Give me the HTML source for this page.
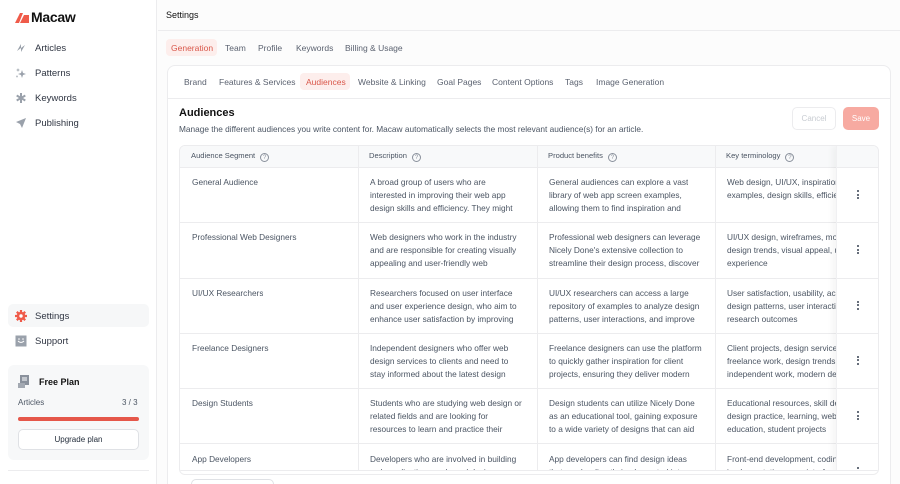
<!DOCTYPE html><html style="width:900px;height:484px;overflow:hidden"><head><meta charset="utf-8"><style>
*{box-sizing:border-box;margin:0;padding:0}
body{width:900px;height:484px;overflow:hidden;font-family:"Liberation Sans",sans-serif;background:#fcfcfc;position:relative;color:#1f2937}
.a{position:absolute;white-space:nowrap}
.sb{position:absolute;left:0;top:0;width:157px;height:484px;background:#fff;border-right:1px solid #ececee}
.nav{position:absolute;left:15px;font-size:9.5px;color:#2f3542;display:flex;align-items:center;gap:8px}
.nav svg{width:12px;height:12px}
.tab{position:absolute;font-size:8.5px;color:#5b6270;top:0}
.card{position:absolute;left:167px;top:65px;width:724px;height:430px;background:#fff;border:1px solid #ececee;border-radius:8px}
.tbl{position:absolute;left:179px;top:145px;width:700px;height:330px;border:1px solid #ececee;border-radius:6px;overflow:hidden;background:#fff}
.hd{position:absolute;top:0;left:0;width:700px;height:22px;background:#f8f9fa;border-bottom:1px solid #ececee}
.hc{position:absolute;top:5px;font-size:7.6px;color:#4b5563}
.q{display:inline-block;width:9px;height:9px;border:1px solid #8a919c;border-radius:50%;font-size:6px;text-align:center;line-height:8px;margin-left:5px;vertical-align:-1px;color:#8a919c}
.vl{position:absolute;top:0;width:1px;height:330px;background:#ececee}
.row{position:absolute;left:0;width:700px;height:55.3px;border-bottom:1px solid #ececee}
.c{position:absolute;top:8px;font-size:8.3px;line-height:13px;color:#4b5563;white-space:nowrap;overflow:hidden}
.dots{position:absolute;left:677px;top:22px;width:2px}
.dots i{display:block;width:2px;height:2px;background:#374151;border-radius:1px;margin-bottom:1.5px}
</style></head><body>
<div class="sb">
 <div class="a" style="left:15px;top:9px;font-size:14px;font-weight:bold;color:#111;display:flex;align-items:center;gap:2px;letter-spacing:-0.3px">
  <svg width="14" height="11" viewBox="0 0 14 11"><path d="M0 11 L5 1 L8 1 L4 11Z M5 11 L9 3 L14 3 L14 11Z" fill="#ef5b4a"/></svg>Macaw</div>
 <div class="nav" style="top:42px"><svg viewBox="0 0 12 12"><path d="M2 9 L6 2 L6 6 L10 3 L6 10 L6 6Z" fill="#9aa1ab"/></svg>Articles</div>
 <div class="nav" style="top:67px"><svg viewBox="0 0 12 12"><path d="M7 3 L8 6 L11 7 L8 8 L7 11 L6 8 L3 7 L6 6Z M3 1 L3.5 2.5 L5 3 L3.5 3.5 L3 5 L2.5 3.5 L1 3 L2.5 2.5Z M2 8 L2.4 9 L3 9.4 L2.4 9.8 L2 11 L1.6 9.8 L1 9.4 L1.6 9Z" fill="#9aa1ab"/></svg>Patterns</div>
 <div class="nav" style="top:92px"><svg viewBox="0 0 12 12"><path d="M6 1V11M1.7 3.5L10.3 8.5M1.7 8.5L10.3 3.5" stroke="#9aa1ab" stroke-width="2"/></svg>Keywords</div>
 <div class="nav" style="top:117px"><svg viewBox="0 0 12 12"><path d="M11 1 L1 5 L5 7 L7 11Z" fill="#9aa1ab"/></svg>Publishing</div>
 <div class="a" style="left:8px;top:304px;width:141px;height:23px;background:#f6f7f8;border-radius:5px"></div>
 <div class="nav" style="top:310px"><svg viewBox="0 0 12 12"><path d="M6 0V12M0 6H12M1.8 1.8L10.2 10.2M1.8 10.2L10.2 1.8" stroke="#ef5b4a" stroke-width="2.2"/><circle cx="6" cy="6" r="4.3" fill="#ef5b4a"/><circle cx="6" cy="6" r="1.7" fill="#fff"/></svg>Settings</div>
 <div class="nav" style="top:335px"><svg viewBox="0 0 12 12"><rect x="0.5" y="0.5" width="11" height="11" fill="#9aa1ab"/><path d="M3 6Q6 9 9 6" stroke="#fff" fill="none"/><circle cx="4" cy="4" r=".8" fill="#fff"/><circle cx="8" cy="4" r=".8" fill="#fff"/></svg>Support</div>
 <div class="a" style="left:8px;top:365px;width:141px;height:95px;background:#f7f8f9;border-radius:6px"></div>
 <svg class="a" style="left:18px;top:375px" width="12" height="13" viewBox="0 0 12 13"><rect x="2" y="0" width="9" height="10" fill="#8a919c"/><rect x="0" y="8" width="7" height="5" fill="#a3a9b2"/><path d="M4 3H9M4 5H9" stroke="#fff"/></svg>
 <div class="a" style="left:39px;top:377px;font-size:9px;font-weight:bold;color:#111">Free Plan</div>
 <div class="a" style="left:18px;top:398px;font-size:8px;color:#4b5563">Articles</div>
 <div class="a" style="left:122px;top:398px;font-size:8px;color:#4b5563">3 / 3</div>
 <div class="a" style="left:18px;top:417px;width:121px;height:4px;background:#e5574a;border-radius:2px"></div>
 <div class="a" style="left:18px;top:429px;width:121px;height:21px;background:#fff;border:1px solid #dfe1e5;border-radius:5px;font-size:8px;color:#1f2937;text-align:center;line-height:19px">Upgrade plan</div>
 <div class="a" style="left:8px;top:470px;width:141px;height:1px;background:#ececee"></div>
</div>
<div class="a" style="left:166px;top:10px;font-size:9px;color:#111">Settings</div>
<div class="a" style="left:158px;top:30px;width:742px;height:1px;background:#ececee"></div>
<div class="a" style="left:166px;top:39px;height:17px;width:850px">
 <div class="a" style="left:0;top:0;width:51px;height:17px;background:#fdeeec;border-radius:4px"></div>
 <div class="tab" style="left:5px;top:4px;color:#d9574a">Generation</div>
 <div class="tab" style="left:59px;top:4px">Team</div>
 <div class="tab" style="left:92px;top:4px">Profile</div>
 <div class="tab" style="left:130px;top:4px">Keywords</div>
 <div class="tab" style="left:179px;top:4px">Billing &amp; Usage</div>
</div>
<div class="card"></div>
<div class="a" style="left:178px;top:73px;height:17px;width:700px">
 <div class="a" style="left:122px;top:0;width:50px;height:17px;background:#fdeeec;border-radius:4px"></div>
 <div class="tab" style="left:6px;top:4px">Brand</div>
 <div class="tab" style="left:41px;top:4px">Features &amp; Services</div>
 <div class="tab" style="left:128px;top:4px;color:#d9574a">Audiences</div>
 <div class="tab" style="left:180px;top:4px">Website &amp; Linking</div>
 <div class="tab" style="left:259px;top:4px">Goal Pages</div>
 <div class="tab" style="left:314px;top:4px">Content Options</div>
 <div class="tab" style="left:387px;top:4px">Tags</div>
 <div class="tab" style="left:418px;top:4px">Image Generation</div>
</div>
<div class="a" style="left:168px;top:98px;width:722px;height:1px;background:#ececee"></div>
<div class="a" style="left:179px;top:107px;font-size:11px;font-weight:bold;color:#111">Audiences</div>
<div class="a" style="left:179px;top:124px;font-size:8.3px;color:#4b5563">Manage the different audiences you write content for. Macaw automatically selects the most relevant audience(s) for an article.</div>
<div class="a" style="left:792px;top:107px;width:44px;height:23px;border:1px solid #ececee;border-radius:5px;font-size:8px;color:#c8ccd2;text-align:center;line-height:21px;background:#fff">Cancel</div>
<div class="a" style="left:843px;top:107px;width:36px;height:23px;background:#f7aaa1;border-radius:5px;font-size:8px;color:#fff;text-align:center;line-height:23px">Save</div>
<div class="tbl">
 <div class="hd">
  <div class="hc" style="left:11px">Audience Segment<span class="q">?</span></div>
  <div class="hc" style="left:189px">Description<span class="q">?</span></div>
  <div class="hc" style="left:368px">Product benefits<span class="q">?</span></div>
  <div class="hc" style="left:546px">Key terminology<span class="q">?</span></div>
 </div>
 <div class="row" style="top:22px"><div class="c" style="left:12px">General Audience</div><div class="c" style="left:190px">A broad group of users who are<br>interested in improving their web app<br>design skills and efficiency. They might</div><div class="c" style="left:369px">General audiences can explore a vast<br>library of web app screen examples,<br>allowing them to find inspiration and</div><div class="c" style="left:547px;width:109px">Web design, UI/UX, inspiration,<br>examples, design skills, efficiency</div><div class="dots"><i></i><i></i><i></i></div></div>
 <div class="row" style="top:77.3px"><div class="c" style="left:12px">Professional Web Designers</div><div class="c" style="left:190px">Web designers who work in the industry<br>and are responsible for creating visually<br>appealing and user-friendly web</div><div class="c" style="left:369px">Professional web designers can leverage<br>Nicely Done's extensive collection to<br>streamline their design process, discover</div><div class="c" style="left:547px;width:109px">UI/UX design, wireframes, mockups,<br>design trends, visual appeal, user<br>experience</div><div class="dots"><i></i><i></i><i></i></div></div>
 <div class="row" style="top:132.6px"><div class="c" style="left:12px">UI/UX Researchers</div><div class="c" style="left:190px">Researchers focused on user interface<br>and user experience design, who aim to<br>enhance user satisfaction by improving</div><div class="c" style="left:369px">UI/UX researchers can access a large<br>repository of examples to analyze design<br>patterns, user interactions, and improve</div><div class="c" style="left:547px;width:109px">User satisfaction, usability, accessibility,<br>design patterns, user interactions,<br>research outcomes</div><div class="dots"><i></i><i></i><i></i></div></div>
 <div class="row" style="top:187.9px"><div class="c" style="left:12px">Freelance Designers</div><div class="c" style="left:190px">Independent designers who offer web<br>design services to clients and need to<br>stay informed about the latest design</div><div class="c" style="left:369px">Freelance designers can use the platform<br>to quickly gather inspiration for client<br>projects, ensuring they deliver modern</div><div class="c" style="left:547px;width:109px">Client projects, design services,<br>freelance work, design trends,<br>independent work, modern design</div><div class="dots"><i></i><i></i><i></i></div></div>
 <div class="row" style="top:243.2px"><div class="c" style="left:12px">Design Students</div><div class="c" style="left:190px">Students who are studying web design or<br>related fields and are looking for<br>resources to learn and practice their</div><div class="c" style="left:369px">Design students can utilize Nicely Done<br>as an educational tool, gaining exposure<br>to a wide variety of designs that can aid</div><div class="c" style="left:547px;width:109px">Educational resources, skill development,<br>design practice, learning, web<br>education, student projects</div><div class="dots"><i></i><i></i><i></i></div></div>
 <div class="row" style="top:298.5px;border:none"><div class="c" style="left:12px">App Developers</div><div class="c" style="left:190px">Developers who are involved in building<br>web applications and need design</div><div class="c" style="left:369px">App developers can find design ideas<br>that can be directly implemented into</div><div class="c" style="left:547px;width:109px">Front-end development, coding,<br>implementation, user interface</div><div class="dots"><i></i><i></i><i></i></div></div>
 <div class="vl" style="left:178px"></div><div class="vl" style="left:357px"></div><div class="vl" style="left:535px"></div>
 <div class="a" style="left:656px;top:0;width:44px;height:330px;box-shadow:-4px 0 6px rgba(0,0,0,0.04);border-left:1px solid #f0f0f2"></div>
 <div class="a" style="left:0;top:324px;width:700px;height:10px;background:#fff;border-top:1px solid #ececee"></div>
</div>
<div class="a" style="left:191px;top:479px;width:83px;height:12px;border:1px solid #dfe1e5;border-radius:5px;background:#fff"></div>
</body></html>
